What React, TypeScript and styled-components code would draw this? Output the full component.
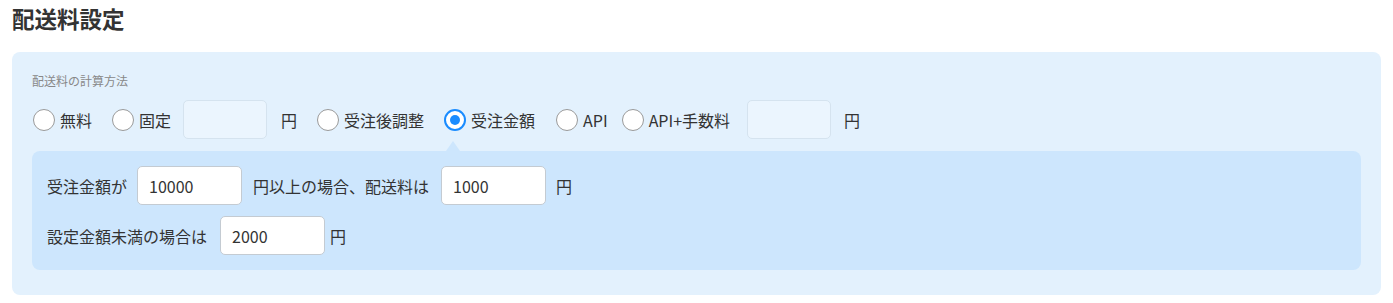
import React, { useState } from "react";
import styled, { createGlobalStyle } from "styled-components";

type Method = "free" | "fixed" | "later" | "amount" | "api" | "apiFee";

const GlobalStyle = createGlobalStyle`
  body {
    margin: 0;
    background: #fff;
    font-family: "Noto Sans CJK JP", "Noto Sans", sans-serif;
    color: #333;
  }
`;

const App: React.FC = () => {
  const [method, setMethod] = useState<Method>("amount");
  const [threshold, setThreshold] = useState("10000");
  const [overFee, setOverFee] = useState("1000");
  const [underFee, setUnderFee] = useState("2000");

  return (
    <Page>
      <GlobalStyle />
      <Title>配送料設定</Title>
      <Panel>
        <FieldLabel>配送料の計算方法</FieldLabel>
        <OptionRow>
          <Option $gap={19}>
            <Radio
              type="radio"
              name="method"
              checked={method === "free"}
              onChange={() => setMethod("free")}
            />
            無料
          </Option>
          <Option $gap={12}>
            <Radio
              type="radio"
              name="method"
              checked={method === "fixed"}
              onChange={() => setMethod("fixed")}
            />
            固定
          </Option>
          <MutedInput disabled={method !== "fixed"} />
          <Unit $left={14} $right={19}>円</Unit>
          <Option $gap={19}>
            <Radio
              type="radio"
              name="method"
              checked={method === "later"}
              onChange={() => setMethod("later")}
            />
            受注後調整
          </Option>
          <Option $gap={20}>
            <Radio
              type="radio"
              name="method"
              checked={method === "amount"}
              onChange={() => setMethod("amount")}
            />
            受注金額
          </Option>
          <Option $gap={13}>
            <Radio
              type="radio"
              name="method"
              checked={method === "api"}
              onChange={() => setMethod("api")}
            />
            API
          </Option>
          <Option $gap={17}>
            <Radio
              type="radio"
              name="method"
              checked={method === "apiFee"}
              onChange={() => setMethod("apiFee")}
            />
            API+手数料
          </Option>
          <MutedInput disabled={method !== "apiFee"} />
          <Unit $left={13} $right={0}>円</Unit>
        </OptionRow>

        {/* 受注金額を選んだ時の詳細設定 */}
        <DetailBox>
          <DetailRow>
            <Text>受注金額が</Text>
            <AmountInput
              $left={10}
              value={threshold}
              onChange={(e) => setThreshold(e.target.value)}
            />
            <Text $left={11}>円以上の場合、配送料は</Text>
            <AmountInput
              $left={12}
              value={overFee}
              onChange={(e) => setOverFee(e.target.value)}
            />
            <Text $left={10}>円</Text>
          </DetailRow>
          <DetailRow>
            <Text>設定金額未満の場合は</Text>
            <AmountInput
              $left={13}
              value={underFee}
              onChange={(e) => setUnderFee(e.target.value)}
            />
            <Text $left={5}>円</Text>
          </DetailRow>
        </DetailBox>
      </Panel>
    </Page>
  );
};

const Page = styled.div`
  padding: 0 12px 8px;
`;

const Title = styled.h2`
  margin: 0 0 16px;
  font-size: 22.5px;
  line-height: 36px;
  font-weight: 700;
  color: #333;
`;

const Panel = styled.div`
  background: #e3f1fd;
  border-radius: 8px;
  padding: 20px 20px 25px;
`;

const FieldLabel = styled.div`
  font-size: 12px;
  line-height: 18px;
  color: #888;
`;

const OptionRow = styled.div`
  display: flex;
  align-items: center;
  height: 39px;
  margin-top: 10px;
`;

const Option = styled.label<{ $gap: number }>`
  display: flex;
  align-items: center;
  gap: 5px;
  font-size: 16px;
  line-height: 22px;
  color: #333;
  margin-right: ${(p) => p.$gap}px;
  cursor: pointer;
`;

const Radio = styled.input`
  appearance: none;
  margin: 0 0 0 1px;
  width: 22px;
  height: 22px;
  border-radius: 50%;
  border: 1px solid #9a9a9a;
  background: #fff;
  display: grid;
  place-items: center;
  cursor: pointer;

  &:checked {
    border: 2px solid #1a8cff;
  }

  &:checked::after {
    content: "";
    width: 10px;
    height: 10px;
    border-radius: 50%;
    background: #1a8cff;
  }
`;

const MutedInput = styled.input`
  box-sizing: border-box;
  width: 84px;
  height: 39px;
  border: 1px solid #d5e3ef;
  border-radius: 5px;
  background: #ebf5fe;
  padding: 0 10px;
  font: inherit;
`;

const Unit = styled.span<{ $left: number; $right: number }>`
  font-size: 16px;
  margin-left: ${(p) => p.$left}px;
  margin-right: ${(p) => p.$right}px;
`;

const DetailBox = styled.div`
  position: relative;
  margin-top: 12px;
  background: #cde6fd;
  border-radius: 8px;
  padding: 15px;
  display: flex;
  flex-direction: column;
  gap: 11px;

  /* 選択中のラジオを指す三角 */
  &::before {
    content: "";
    position: absolute;
    top: -10px;
    left: 414px;
    border-left: 7px solid transparent;
    border-right: 7px solid transparent;
    border-bottom: 10px solid #cde6fd;
  }
`;

const DetailRow = styled.div`
  display: flex;
  align-items: center;
  height: 39px;
`;

const Text = styled.span<{ $left?: number }>`
  font-size: 16px;
  color: #333;
  margin-left: ${(p) => p.$left ?? 0}px;
`;

const AmountInput = styled.input<{ $left: number }>`
  box-sizing: border-box;
  width: 105px;
  height: 39px;
  margin-left: ${(p) => p.$left}px;
  border: 1px solid #c4cbd2;
  border-radius: 5px;
  background: #fff;
  padding: 0 11px;
  font-family: inherit;
  font-size: 16px;
  color: #333;
  outline: none;
`;

export default App;
